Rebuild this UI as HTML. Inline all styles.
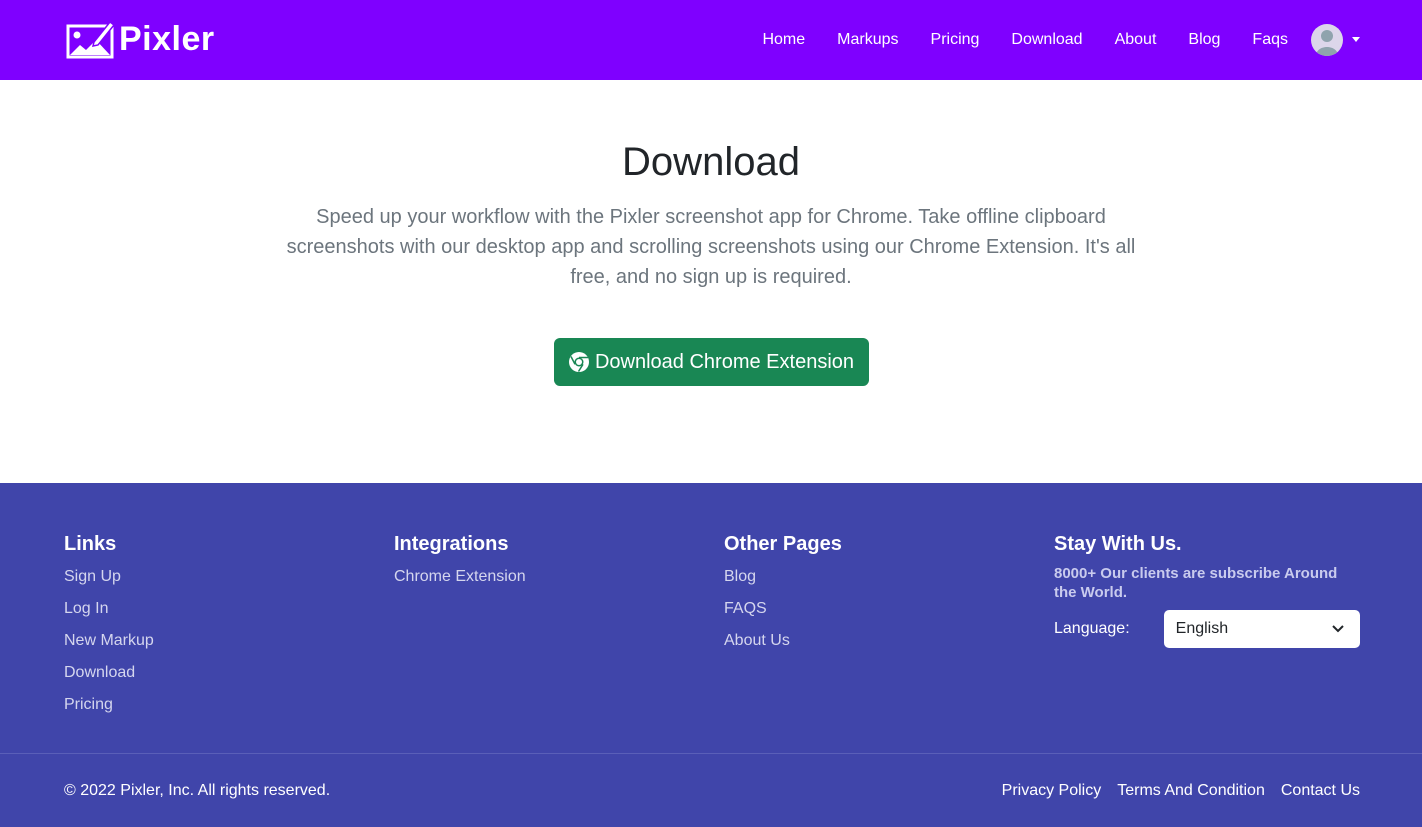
<!DOCTYPE html>
<html><head><meta charset="utf-8"><style>
*{box-sizing:border-box;margin:0;padding:0}
body{width:1422px;height:827px;overflow:hidden;font-family:"Liberation Sans",sans-serif;background:#fff;color:#212529}
nav{height:80px;background:#7f00ff;position:relative}
.logo{position:absolute;left:66px;top:18px;display:flex;align-items:center}
.logo span{color:#fff;font-weight:bold;font-size:34px;margin-left:3px;letter-spacing:0.5px}
.links{position:absolute;right:134px;top:31px;display:flex;gap:32px;color:#fff;font-size:16px}
.av{position:absolute;left:1311px;top:24px;width:32px;height:32px;border-radius:50%;background:#dcd6ea;overflow:hidden}
.caret{position:absolute;left:1352px;top:37px;border-left:4px solid transparent;border-right:4px solid transparent;border-top:5px solid #fff}
h1{text-align:center;font-size:40px;font-weight:500;margin-top:140px;line-height:44px;position:absolute;top:0;width:100%}
.lead{position:absolute;top:202px;left:280px;width:862px;text-align:center;font-size:20px;line-height:30px;color:#6c757d}
.btn{position:absolute;left:554px;top:338px;width:315px;height:48px;background:#198754;border-radius:6px;color:#fff;font-size:20px;display:flex;align-items:center;justify-content:center;gap:6px}
footer{position:absolute;top:483px;left:0;width:1422px;height:344px;background:#4045aa;color:#fff}
.col{position:absolute;top:50px}
.col h5{font-size:20px;font-weight:bold;margin-bottom:5px}
.col a{display:block;color:#d5d6ee;font-size:16px;line-height:32px}
.sub{font-size:15px;font-weight:bold;color:#c9cbee;line-height:19px;margin-top:8px}
.lang{display:flex;align-items:center;margin-top:8px;font-size:16px}
.sel{margin-left:34px;width:196px;height:38px;background:#fff;color:#212529;border-radius:5px;padding:10px 12px;position:relative}
hr{position:absolute;top:270px;left:0;width:100%;border:0;border-top:1px solid #5a5fb8}
.bot{position:absolute;top:299px;font-size:16px}
</style></head><body>
<nav>
<div class="logo"><svg width="50" height="42" viewBox="0 0 50 42"><rect x="2" y="8" width="44" height="31" fill="none" stroke="#fff" stroke-width="3"/><circle cx="11" cy="17" r="3.5" fill="#fff"/><path d="M4 37 L14 27 L20 32 L30 22 L44 37Z" fill="#fff"/><path d="M28 24 L44 4 L48 7 L32 27 L27 28Z" fill="#fff" stroke="#7f00ff" stroke-width="1.5"/></svg><span>Pixler</span></div>
<div class="links"><span>Home</span><span>Markups</span><span>Pricing</span><span>Download</span><span>About</span><span>Blog</span><span>Faqs</span></div>
<div class="av"><svg width="32" height="32"><circle cx="16" cy="12" r="6" fill="#8fa3ad"/><path d="M5 32 C5 20 27 20 27 32Z" fill="#8fa3ad"/></svg></div>
<div class="caret"></div>
</nav>
<h1>Download</h1>
<p class="lead">Speed up your workflow with the Pixler screenshot app for Chrome. Take offline clipboard screenshots with our desktop app and scrolling screenshots using our Chrome Extension. It's all free, and no sign up is required.</p>
<div class="btn"><svg width="20" height="20" viewBox="0 0 20 20"><circle cx="10" cy="10" r="10" fill="#fff"/><circle cx="10" cy="10" r="4.5" fill="#198754"/><circle cx="10" cy="10" r="3" fill="#fff"/><path d="M10 5.5 L19 5.5 M6 12.3 L2 4.5 M14 12.3 L9.5 19.5" stroke="#198754" stroke-width="1.5"/></svg>Download Chrome Extension</div>
<footer>
<div class="col" style="left:64px"><h5>Links</h5><a>Sign Up</a><a>Log In</a><a>New Markup</a><a>Download</a><a>Pricing</a></div>
<div class="col" style="left:394px"><h5>Integrations</h5><a>Chrome Extension</a></div>
<div class="col" style="left:724px"><h5>Other Pages</h5><a>Blog</a><a>FAQS</a><a>About Us</a></div>
<div class="col" style="left:1054px;width:306px"><h5>Stay With Us.</h5><div class="sub">8000+ Our clients are subscribe Around the World.</div>
<div class="lang">Language:<div class="sel">English<svg style="position:absolute;right:16px;top:15px" width="12" height="8"><path d="M1 1 L6 6 L11 1" fill="none" stroke="#212529" stroke-width="2"/></svg></div></div></div>
<hr>
<div class="bot" style="left:64px">© 2022 Pixler, Inc. All rights reserved.</div>
<div class="bot" style="right:62px;display:flex;gap:16px"><span>Privacy Policy</span><span>Terms And Condition</span><span>Contact Us</span></div>
</footer>
</body></html>
